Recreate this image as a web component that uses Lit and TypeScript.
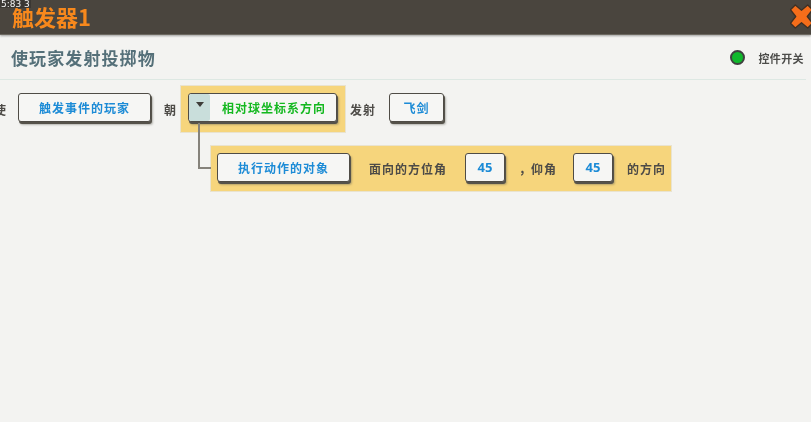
import { LitElement, html, css } from "lit";
import { customElement } from "lit/decorators.js";

@customElement("app-root")
export class AppRoot extends LitElement {
  static styles = css`
    :host {
      display: block;
      position: relative;
      width: 811px;
      height: 422px;
      overflow: hidden;
      background: #f3f3f1;
      font-family: "Noto Sans CJK SC", "Liberation Sans", sans-serif;
      font-weight: 500;
    }
    .blur { filter: blur(0.6px); height: 100%; }
    .fps {
      position: absolute; left: 0; top: 0; padding: 0 1px;
      font: 400 9px/8px "DejaVu Sans", sans-serif;
      color: #f4f4f4; background: #3a3733; z-index: 2;
    }
    .top {
      height: 35px; box-sizing: border-box; background: #4a453e;
      border-bottom: 1px solid #6b675f;
      box-shadow: 0 1px 2px rgba(60,60,60,.45);
      display: flex; align-items: center; justify-content: space-between;
      padding: 0 0 0 12px;
    }
    .title {
      color: #f7881c; font-size: 22px; line-height: 22px; font-weight: 700;
      margin-top: -2px;
      font-family: "Noto Sans CJK SC", sans-serif;
    }
    .close { width: 23px; height: 25px; margin: -2px -2px 0 0; display: block; }
    .sub {
      height: 44px; box-sizing: border-box; margin-right: 5px; margin-top: 1px;
      border-bottom: 1px solid #dde8e3;
      display: flex; align-items: center; justify-content: space-between;
      padding: 0 2px 0 11px;
    }
    .sub h1 {
      margin: 0; font-size: 17px; font-weight: 700; letter-spacing: 1.1px;
      color: #557079; line-height: 44px;
    }
    .switch { display: flex; align-items: center; gap: 13px; font-size: 11px; color: #4c4c4a; font-weight: 700; letter-spacing: .4px; }
    .dot {
      width: 11px; height: 11px; border-radius: 50%; background: #10b82c;
      border: 2.5px solid #404040;
    }
    .rows { position: relative; padding-top: 6px; }
    .row { display: flex; align-items: center; }
    .row1 { margin: 0 0 0 -6px; height: 46px; }
    .row2 { margin: 14px 0 0 211px; }
    .lbl { font-size: 12px; color: #4d4b47; letter-spacing: 1px; white-space: nowrap; font-weight: 700; }
    .btn {
      box-sizing: border-box; height: 29px; margin-bottom: 3px; background: #f6f6f4;
      border: 1.5px solid #4f4c46; border-radius: 3px;
      box-shadow: 1px 2px 0 #55524a, 2px 3px 2px rgba(90,90,80,.4);
      display: flex; align-items: center; justify-content: center;
      font-size: 12px; color: #1c8bd6; letter-spacing: 1px; white-space: nowrap; font-weight: 700;
    }
    .zone { background: #f6d57c; box-shadow: 0 0 0 1px #e9e3cf; box-sizing: border-box; }
    .z1 { width: 164px; height: 46px; padding: 7px; margin: 0 5px 0 0; }
    .drop { width: 149px; justify-content: flex-start; overflow: hidden; color: #14b81f; }
    .arrow {
      width: 21px; height: 100%; background: #c9dedb; flex: none;
      display: flex; align-items: flex-start; justify-content: center;
      padding-top: 8px; box-sizing: border-box; border-radius: 2px;
    }
    .tri { width: 0; height: 0; border: 4.5px solid transparent; border-top: 5px solid #3f3d39; border-bottom: 0; }
    .drop span { margin-left: 12px; }
    .z2 {
      width: 460px; height: 45px; display: flex; align-items: center;
      padding: 0 0 0 6px;
    }
    .num { width: 40px; font: 700 13px "Noto Sans", sans-serif; letter-spacing: 0; }
    .comma { display: inline-block; width: 12px; }
    .conn {
      position: absolute; left: 198px; top: 43px; width: 13px; height: 46px;
      box-sizing: border-box; border-left: 2px solid #85827b; border-bottom: 2px solid #85827b;
    }
  `;

  render() {
    return html`
      <div class="blur">
        <div class="fps">5:83 3</div>
        <div class="top">
          <div class="title">触发器1</div>
          <svg class="close" viewBox="0 0 24 24" preserveAspectRatio="none">
            <path d="M5.5 1 L12 6 L18.5 1 L23.5 5.5 L18 12 L23.5 18.5 L18.5 23 L12 18 L5.5 23 L.5 18.5 L6 12 L.5 5.5 Z"
              fill="#f56d1a" stroke="#3c2f24" stroke-width="1.3" stroke-linejoin="round" />
          </svg>
        </div>
        <div class="sub">
          <h1>使玩家发射投掷物</h1>
          <div class="switch"><div class="dot"></div>控件开关</div>
        </div>
        <div class="rows">
          <div class="row row1">
            <div class="lbl" style="width:24px">使</div>
            <div class="btn" style="width:133px">触发事件的玩家</div>
            <div class="lbl" style="margin-left:13px;width:17px">朝</div>
            <div class="zone z1">
              <div class="btn drop"><div class="arrow"><div class="tri"></div></div><span>相对球坐标系方向</span></div>
            </div>
            <div class="lbl" style="width:39px">发射</div>
            <div class="btn" style="width:55px">飞剑</div>
          </div>
          <div class="conn"></div>
          <div class="row row2">
            <div class="zone z2">
              <div class="btn" style="width:133px">执行动作的对象</div>
              <div class="lbl" style="margin-left:19px;width:96px">面向的方位角</div>
              <div class="btn num">45</div>
              <div class="lbl" style="margin-left:14px;width:54px"><span class="comma">，</span>仰角</div>
              <div class="btn num">45</div>
              <div class="lbl" style="margin-left:14px">的方向</div>
            </div>
          </div>
        </div>
      </div>
    `;
  }
}
